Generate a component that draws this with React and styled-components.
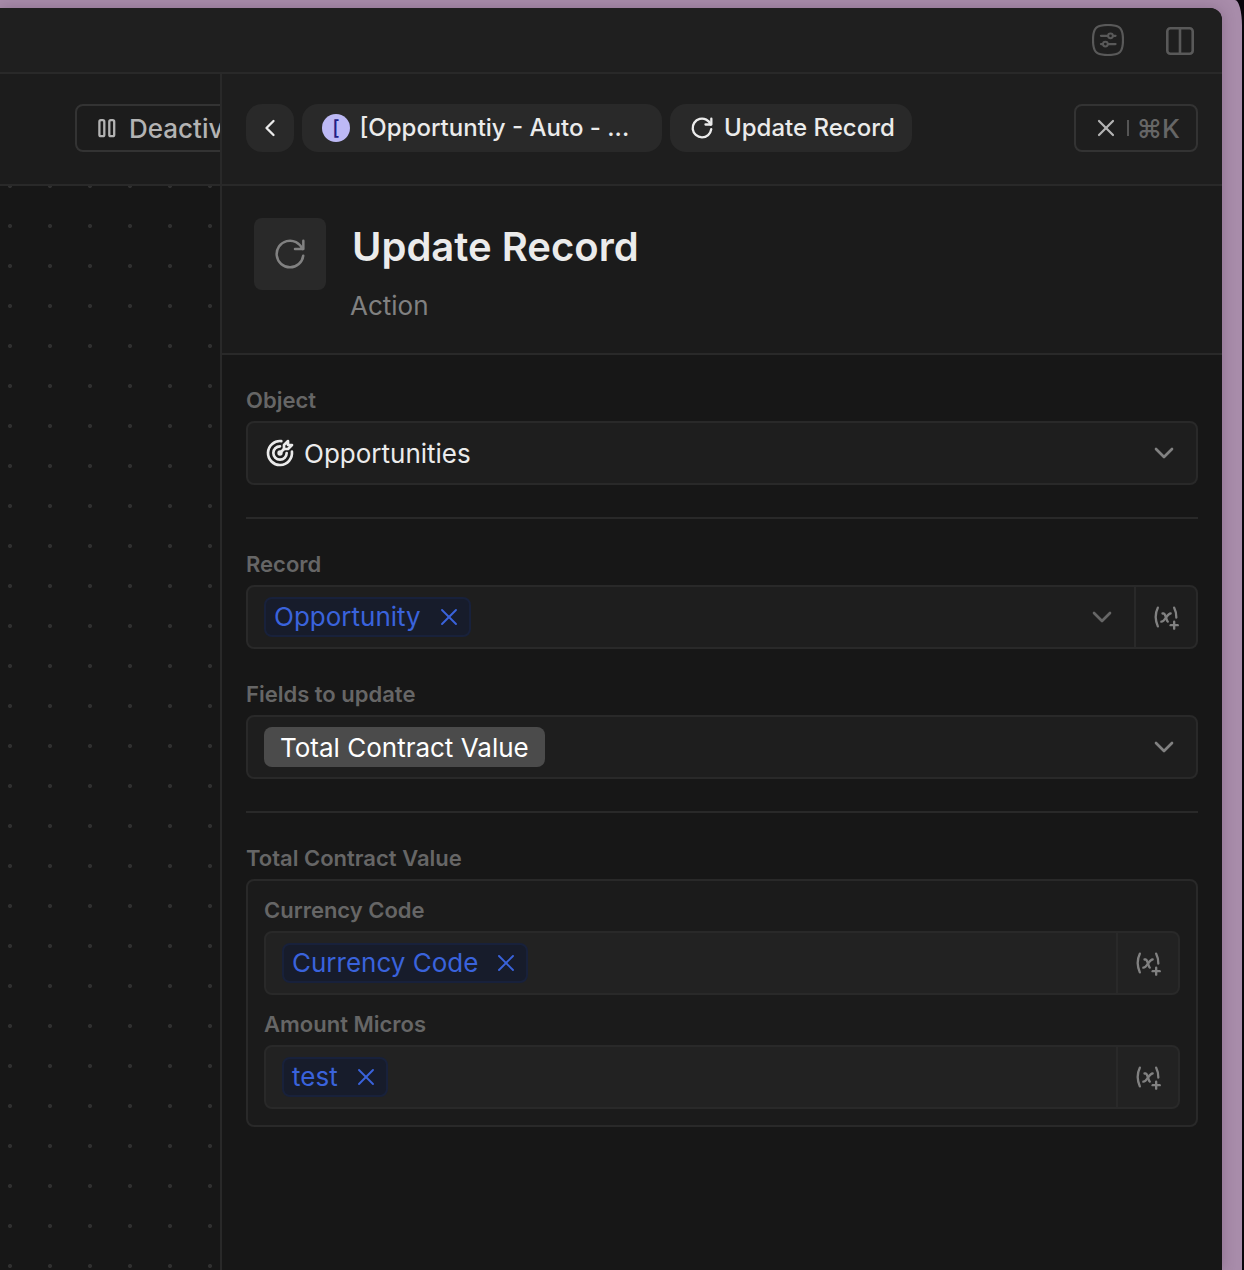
import React from "react";
import styled, { createGlobalStyle } from "styled-components";
import {
  TbChevronDown,
  TbChevronLeft,
  TbReload,
  TbTargetArrow,
  TbVariablePlus,
  TbX,
} from "react-icons/tb";

const GlobalStyle = createGlobalStyle`
  * { box-sizing: border-box; }
  html, body { margin: 0; padding: 0; background: #08040a; }
  body { font-family: Inter, "Open Sans", sans-serif; color: #ebebeb; overflow: hidden; }
  svg { display: block; flex-shrink: 0; }
`;

const Backdrop = styled.div`
  width: 1242px;
  height: 1270px;
  padding: 8px 20px 0 0;
  background: #a88caa;
  border-top-right-radius: 7px 26px;
`;

const Window = styled.div`
  height: 1262px;
  display: flex;
  flex-direction: column;
  overflow: hidden;
  background: #171717;
  border-top-right-radius: 12px;
  box-shadow: 0 0 14px rgba(60, 30, 60, 0.25);
`;

const TopBar = styled.header`
  height: 66px;
  flex-shrink: 0;
  display: flex;
  align-items: center;
  justify-content: flex-end;
  gap: 40px;
  padding-right: 26px;
  background: #1f1f1f;
  border-bottom: 2px solid #292929;
  color: #595959;
`;

const Workspace = styled.div`
  flex: 1;
  display: flex;
  min-height: 0;
`;

const CanvasColumn = styled.section`
  width: 220px;
  display: flex;
  flex-direction: column;
  overflow: hidden;
`;

const CanvasToolbar = styled.div`
  height: 112px;
  flex-shrink: 0;
  display: flex;
  align-items: center;
  padding: 0 0 2px 75px;
  background: #1c1c1c;
  border-bottom: 2px solid #292929;
`;

const Canvas = styled.div`
  flex: 1;
  background-color: #171717;
  background-image: radial-gradient(circle at center, #303030 1.6px, transparent 2.4px);
  background-size: 40px 40px;
  background-position: -10px -20px;
`;

const OutlineButton = styled.button`
  height: 48px;
  flex-shrink: 0;
  display: flex;
  align-items: center;
  gap: ${(p) => p.$gap}px;
  padding: 0 16px;
  border: 2px solid #333;
  border-radius: 8px;
  background: transparent;
  color: #b3b3b3;
  font: 500 26px/1 Inter, sans-serif;
  white-space: nowrap;
`;

const ButtonText = styled.span`
  padding-top: 2px;
  color: ${(p) => (p.$muted ? "#666" : "inherit")};
`;

const Panel = styled.aside`
  flex: 1;
  min-width: 0;
  display: flex;
  flex-direction: column;
  border-left: 2px solid #292929;
`;

const PanelHeader = styled.div`
  height: 112px;
  flex-shrink: 0;
  display: flex;
  align-items: center;
  gap: 8px;
  padding: 0 24px 2px;
  background: #1e1e1e;
  border-bottom: 2px solid #292929;
`;

const Pill = styled.button`
  height: 48px;
  width: ${(p) => p.$width}px;
  display: flex;
  align-items: center;
  justify-content: ${(p) => (p.$centered ? "center" : "flex-start")};
  gap: ${(p) => p.$gap || 8}px;
  padding: 0 0 0 ${(p) => p.$inset || 0}px;
  border: 0;
  border-radius: 16px;
  background: #292929;
  color: #ebebeb;
  font: 500 24px/1 Inter, sans-serif;
  white-space: nowrap;
`;

const Avatar = styled.span`
  width: 28px;
  height: 28px;
  display: grid;
  place-items: center;
  border-radius: 50%;
  background: #bdb9f5;
  color: #231e85;
  font-size: 20px;
  line-height: 1;
`;

const HeaderSpacer = styled.div`
  flex: 1;
`;

const ShortcutDivider = styled.span`
  width: 2px;
  height: 16px;
  background: #555;
`;

const TitleSection = styled.div`
  height: 169px;
  flex-shrink: 0;
  display: flex;
  gap: 24px;
  padding: 32px;
  background: #1b1b1b;
  border-bottom: 2px solid #292929;
`;

const IconTile = styled.div`
  width: 72px;
  height: 72px;
  display: grid;
  place-items: center;
  border-radius: 8px;
  background: #292929;
  color: #818181;
`;

const TitleText = styled.div`
  display: flex;
  flex-direction: column;
  gap: 12px;
`;

const Title = styled.h1`
  margin: 0;
  padding-left: 2px;
  font-size: 40px;
  font-weight: 600;
  line-height: 58px;
`;

const Subtitle = styled.span`
  font-size: 26px;
  line-height: 36px;
  color: #818181;
`;

const Form = styled.div`
  flex: 1;
  display: flex;
  flex-direction: column;
  gap: 32px;
  padding: 32px 24px;
  background: #171717;
`;

const Field = styled.div`
  display: flex;
  flex-direction: column;
  gap: 8px;
`;

const Label = styled.label`
  height: 26px;
  font-size: 22px;
  font-weight: 600;
  line-height: 26px;
  color: #666;
`;

const Control = styled.div`
  height: 64px;
  display: flex;
  border: 2px solid #292929;
  border-radius: 8px;
  background: ${(p) => (p.$nested ? "#222" : "#1e1e1e")};
  overflow: hidden;
`;

const ControlMain = styled.div`
  flex: 1;
  display: flex;
  align-items: center;
  gap: 8px;
  padding: 0 16px;
  font-size: 26px;
  line-height: 32px;
`;

const ControlValue = styled.span`
  flex: 1;
  padding-top: 2px;
`;

const ChevronSlot = styled.span`
  margin-left: auto;
  color: ${(p) => (p.$dim ? "#666" : "#818181")};
`;

const VariableButton = styled.button`
  width: 62px;
  display: grid;
  place-items: center;
  padding: 0;
  border: 0;
  border-left: 2px solid #292929;
  background: transparent;
  color: #818181;
`;

const VariableChip = styled.span`
  height: 40px;
  display: flex;
  align-items: center;
  gap: 14px;
  padding: 0 6px 0 8px;
  border: 2px solid #18213b;
  border-radius: 8px;
  background: #171c2b;
  color: #3a63dc;
  line-height: 36px;
`;

const Tag = styled.span`
  height: 40px;
  padding: 0 16px;
  border-radius: 8px;
  background: #4b4b4b;
  color: #fff;
  line-height: 41px;
`;

const Divider = styled.hr`
  width: 100%;
  height: 2px;
  margin: 0;
  border: 0;
  background: #292929;
`;

const FieldGroup = styled.div`
  display: flex;
  flex-direction: column;
  gap: 16px;
  padding: 16px;
  border: 2px solid #292929;
  border-radius: 8px;
  background: #1b1b1b;
`;

function SlidersIcon() {
  return (
    <svg width="32" height="32" viewBox="0 0 32 32" fill="none" stroke="currentColor" strokeWidth="2">
      <path d="M16 1C28 1 31 4 31 16S28 31 16 31 1 28 1 16 4 1 16 1Z" strokeWidth="2.200" />
      <path d="M9 11.800h7M21 11.800h2.500M9 20.100h1.800M16 20.100h7.500" strokeLinecap="round" strokeWidth="2.300" />
      <circle cx="18.500" cy="11.800" r="2.400" />
      <circle cx="13.400" cy="20.100" r="2.400" />
    </svg>
  );
}

function ColumnsIcon() {
  return (
    <svg width="32" height="32" viewBox="0 0 32 32" fill="none" stroke="currentColor" strokeWidth="2.600">
      <rect x="3.300" y="4.300" width="25.400" height="25.400" rx="3" />
      <path d="M16 4.300v25.400" />
    </svg>
  );
}

function PauseIcon() {
  return (
    <svg width="28" height="28" viewBox="0 0 28 28" fill="none" stroke="currentColor" strokeWidth="2.300">
      <rect x="6.400" y="6.200" width="4.900" height="16" rx="1.500" />
      <rect x="16.300" y="6.200" width="4.900" height="16" rx="1.500" />
    </svg>
  );
}

function VariablePicker() {
  return (
    <VariableButton type="button" aria-label="Insert variable">
      <TbVariablePlus size={28} strokeWidth={2} />
    </VariableButton>
  );
}

function Chip({ children }) {
  return (
    <VariableChip>
      {children}
      <TbX size={28} strokeWidth={1.6} />
    </VariableChip>
  );
}

function Chevron({ dim }) {
  return (
    <ChevronSlot $dim={dim}>
      <TbChevronDown size={32} strokeWidth={2} />
    </ChevronSlot>
  );
}

export default function App() {
  return (
    <>
      <GlobalStyle />
      <Backdrop>
        <Window>
          <TopBar>
            <SlidersIcon />
            <ColumnsIcon />
          </TopBar>
          <Workspace>
            <CanvasColumn>
              <CanvasToolbar>
                <OutlineButton $gap={8}>
                  <PauseIcon />
                  <ButtonText>Deactivate</ButtonText>
                </OutlineButton>
              </CanvasToolbar>
              <Canvas />
            </CanvasColumn>
            <Panel>
              <PanelHeader>
                <Pill $width={48} $centered aria-label="Back">
                  <TbChevronLeft size={28} strokeWidth={2} />
                </Pill>
                <Pill $width={360} $inset={20} $gap={9.5}>
                  <Avatar>[</Avatar>
                  [Opportuntiy - Auto - ...
                </Pill>
                <Pill $width={242} $inset={18}>
                  <TbReload size={28} strokeWidth={2} />
                  Update Record
                </Pill>
                <HeaderSpacer />
                <OutlineButton $gap={7}>
                  <TbX size={28} strokeWidth={1.9} />
                  <ShortcutDivider />
                  <ButtonText $muted>⌘K</ButtonText>
                </OutlineButton>
              </PanelHeader>
              <TitleSection>
                <IconTile>
                  <TbReload size={40} strokeWidth={1.5} />
                </IconTile>
                <TitleText>
                  <Title>Update Record</Title>
                  <Subtitle>Action</Subtitle>
                </TitleText>
              </TitleSection>
              <Form>
                <Field>
                  <Label>Object</Label>
                  <Control>
                    <ControlMain>
                      <TbTargetArrow size={32} strokeWidth={2} />
                      <ControlValue>Opportunities</ControlValue>
                      <Chevron />
                    </ControlMain>
                  </Control>
                </Field>
                <Divider />
                <Field>
                  <Label>Record</Label>
                  <Control>
                    <ControlMain>
                      <Chip>Opportunity</Chip>
                      <Chevron dim />
                    </ControlMain>
                    <VariablePicker />
                  </Control>
                </Field>
                <Field>
                  <Label>Fields to update</Label>
                  <Control>
                    <ControlMain>
                      <Tag>Total Contract Value</Tag>
                      <Chevron />
                    </ControlMain>
                  </Control>
                </Field>
                <Divider />
                <Field>
                  <Label>Total Contract Value</Label>
                  <FieldGroup>
                    <Field>
                      <Label>Currency Code</Label>
                      <Control $nested>
                        <ControlMain>
                          <Chip>Currency Code</Chip>
                        </ControlMain>
                        <VariablePicker />
                      </Control>
                    </Field>
                    <Field>
                      <Label>Amount Micros</Label>
                      <Control $nested>
                        <ControlMain>
                          <Chip>test</Chip>
                        </ControlMain>
                        <VariablePicker />
                      </Control>
                    </Field>
                  </FieldGroup>
                </Field>
              </Form>
            </Panel>
          </Workspace>
        </Window>
      </Backdrop>
    </>
  );
}
